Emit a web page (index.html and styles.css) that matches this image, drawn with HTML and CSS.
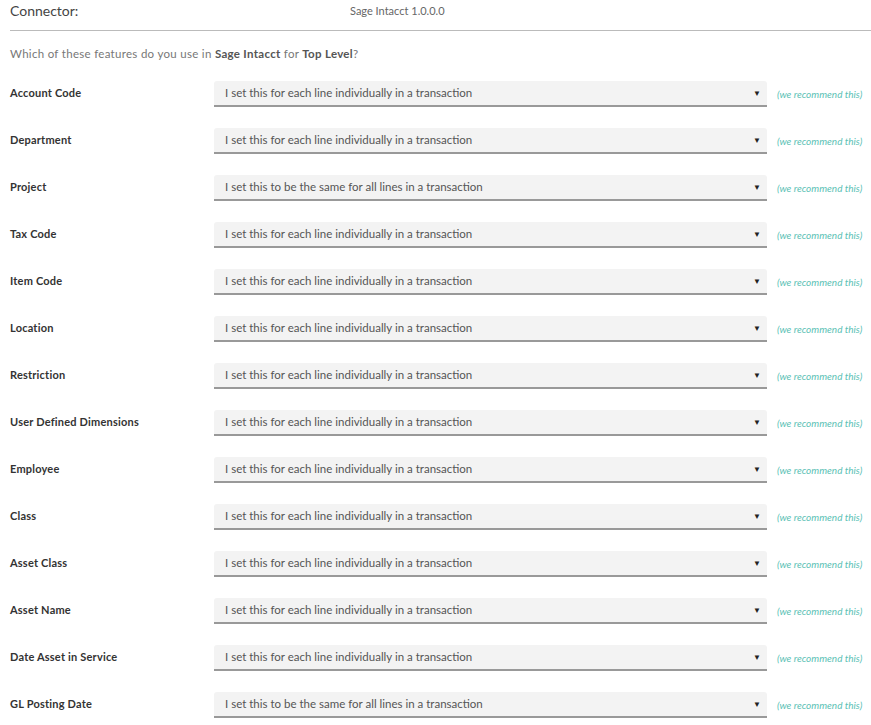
FILE: index.html
```html
<!DOCTYPE html>
<html lang="en">
<head>
    <meta charset="UTF-8">
    <meta name="viewport" content="width=device-width, initial-scale=1.0">
    <title>Connector Features</title>
    <link rel="stylesheet" href="styles.css">
</head>
<body>
    <div class="connector">
        <span class="connector-label">Connector:</span>
        <span class="connector-value">Sage Intacct 1.0.0.0</span>
    </div>

    <p class="question">Which of these features do you use in <b>Sage Intacct</b> for <b>Top Level</b>?</p>

    <div class="features">
        <div class="feature">
            <span class="feature-name">Account Code</span>
            <div class="select"><span>I set this for each line individually in a transaction</span><span class="arrow">&#9660;</span></div>
            <span class="hint">(we recommend this)</span>
        </div>
        <div class="feature">
            <span class="feature-name">Department</span>
            <div class="select"><span>I set this for each line individually in a transaction</span><span class="arrow">&#9660;</span></div>
            <span class="hint">(we recommend this)</span>
        </div>
        <div class="feature">
            <span class="feature-name">Project</span>
            <div class="select"><span>I set this to be the same for all lines in a transaction</span><span class="arrow">&#9660;</span></div>
            <span class="hint">(we recommend this)</span>
        </div>
        <div class="feature">
            <span class="feature-name">Tax Code</span>
            <div class="select"><span>I set this for each line individually in a transaction</span><span class="arrow">&#9660;</span></div>
            <span class="hint">(we recommend this)</span>
        </div>
        <div class="feature">
            <span class="feature-name">Item Code</span>
            <div class="select"><span>I set this for each line individually in a transaction</span><span class="arrow">&#9660;</span></div>
            <span class="hint">(we recommend this)</span>
        </div>
        <div class="feature">
            <span class="feature-name">Location</span>
            <div class="select"><span>I set this for each line individually in a transaction</span><span class="arrow">&#9660;</span></div>
            <span class="hint">(we recommend this)</span>
        </div>
        <div class="feature">
            <span class="feature-name">Restriction</span>
            <div class="select"><span>I set this for each line individually in a transaction</span><span class="arrow">&#9660;</span></div>
            <span class="hint">(we recommend this)</span>
        </div>
        <div class="feature">
            <span class="feature-name">User Defined Dimensions</span>
            <div class="select"><span>I set this for each line individually in a transaction</span><span class="arrow">&#9660;</span></div>
            <span class="hint">(we recommend this)</span>
        </div>
        <div class="feature">
            <span class="feature-name">Employee</span>
            <div class="select"><span>I set this for each line individually in a transaction</span><span class="arrow">&#9660;</span></div>
            <span class="hint">(we recommend this)</span>
        </div>
        <div class="feature">
            <span class="feature-name">Class</span>
            <div class="select"><span>I set this for each line individually in a transaction</span><span class="arrow">&#9660;</span></div>
            <span class="hint">(we recommend this)</span>
        </div>
        <div class="feature">
            <span class="feature-name">Asset Class</span>
            <div class="select"><span>I set this for each line individually in a transaction</span><span class="arrow">&#9660;</span></div>
            <span class="hint">(we recommend this)</span>
        </div>
        <div class="feature">
            <span class="feature-name">Asset Name</span>
            <div class="select"><span>I set this for each line individually in a transaction</span><span class="arrow">&#9660;</span></div>
            <span class="hint">(we recommend this)</span>
        </div>
        <div class="feature">
            <span class="feature-name">Date Asset in Service</span>
            <div class="select"><span>I set this for each line individually in a transaction</span><span class="arrow">&#9660;</span></div>
            <span class="hint">(we recommend this)</span>
        </div>
        <div class="feature">
            <span class="feature-name">GL Posting Date</span>
            <div class="select"><span>I set this to be the same for all lines in a transaction</span><span class="arrow">&#9660;</span></div>
            <span class="hint">(we recommend this)</span>
        </div>
    </div>
</body>
</html>
```

FILE: styles.css
```css
* {
    margin: 0;
    padding: 0;
    box-sizing: border-box;
}

body {
    background: #fff;
    font-family: "Lato", "Noto Sans", sans-serif;
    color: #333;
    padding-left: 10px;
    overflow: hidden;
}

.connector {
    display: grid;
    grid-template-columns: 340px auto;
    align-items: center;
    height: 31px;
    padding-bottom: 10px;
    border-bottom: 1px solid #bbb;
}

.connector-label {
    font-size: 14px;
    color: #444;
}

.connector-value {
    font-size: 11px;
    color: #666;
}

.question {
    font-size: 11.5px;
    letter-spacing: 0.3px;
    color: #777;
    margin-top: 16px;
    line-height: 14px;
}

.question b {
    color: #555;
}

.features {
    margin-top: 9px;
}

.feature {
    display: grid;
    grid-template-columns: 194px 553px auto;
    column-gap: 10px;
    align-items: center;
    height: 47px;
}

.feature-name {
    font-size: 11px;
    font-weight: bold;
    letter-spacing: 0.2px;
    color: #333;
    margin-bottom: 2px;
}

.select {
    display: flex;
    align-items: center;
    justify-content: space-between;
    height: 26px;
    padding: 0 6px 0 11px;
    background: #f3f3f3;
    border-bottom: 2px solid #999;
    border-radius: 3px 3px 0 0;
    font-size: 11.5px;
    color: #555;
}

.arrow {
    font-size: 8px;
    color: #222;
}

.hint {
    font-size: 10px;
    font-style: italic;
    color: #5bbfb5;
}
```
